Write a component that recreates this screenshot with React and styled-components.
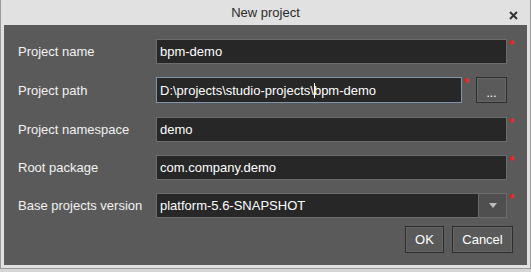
import React from 'react';
import styled, { createGlobalStyle } from 'styled-components';

const GlobalStyle = createGlobalStyle`
    html, body {
        margin: 0;
        padding: 0;
        background: #d6d6d6;
        font-family: "Liberation Sans", Arial, sans-serif;
    }
`;

const Window = styled.div`
    width: 531px;
    height: 269px;
    box-sizing: border-box;
    border: 1px solid #9a9a9a;
    border-top: none;
    background: #e1e1e1;
    padding: 0 3px 3px 3px;
    display: flex;
    flex-direction: column;
`;

const TitleBar = styled.div`
    height: 25px;
    display: flex;
    align-items: center;
    justify-content: center;
    position: relative;
    color: #2b2b2b;
    font-size: 13px;
`;

const Close = styled.svg`
    position: absolute;
    right: 9px;
    top: 11px;
`;

const Body = styled.div`
    flex: 1;
    background: #5a5a5a;
    padding: 14px 6px 0 14px;
    display: flex;
    flex-direction: column;
`;

const Row = styled.div`
    display: flex;
    align-items: stretch;
    height: ${p => p.$h || 25}px;
    margin-bottom: ${p => p.$mb || 13}px;
`;

const Label = styled.div`
    width: 138px;
    display: flex;
    align-items: center;
    color: #f2f2f2;
    font-size: 13px;
`;

const Field = styled.div`
    flex: 1;
    box-sizing: border-box;
    background: #272727;
    border: 1px solid ${p => p.$focus ? '#7f93ad' : '#6c6c6c'};
    color: #fff;
    font-size: 13px;
    display: flex;
    align-items: center;
    padding-left: 3px;
    white-space: nowrap;
    overflow: hidden;
`;

const Caret = styled.span`
    display: inline-block;
    width: 1px;
    height: 15px;
    background: #fff;
    margin: 0 -1px 0 0;
`;

const Star = styled.div`
    width: 14px;
    color: #ff1a1a;
    font-size: 13px;
    font-weight: bold;
    line-height: 11px;
    padding-left: 2px;
    box-sizing: border-box;
`;

const DotsButton = styled.div`
    width: 31px;
    box-sizing: border-box;
    border: 1px solid #2e2e2e;
    box-shadow: inset 0 0 0 1px #666;
    color: #fff;
    font-size: 12px;
    display: flex;
    align-items: center;
    justify-content: center;
    padding-top: 5px;
`;

const DropButton = styled.div`
    width: 27px;
    align-self: stretch;
    margin: -1px -1px -1px auto;
    background: #4f4f4f;
    border: 1px solid #6c6c6c;
    display: flex;
    align-items: center;
    justify-content: center;
`;

const Footer = styled.div`
    display: flex;
    justify-content: flex-end;
    gap: 8px;
    padding-right: 8px;
    margin-top: -5px;
`;

const Button = styled.div`
    width: ${p => p.$w}px;
    height: 27px;
    box-sizing: border-box;
    border: 1px solid #2e2e2e;
    box-shadow: inset 0 0 0 1px #646464;
    color: #fff;
    font-size: 13px;
    display: flex;
    align-items: center;
    justify-content: center;
`;

const App = () => (
    <>
        <GlobalStyle />
        <Window>
            <TitleBar>
                New project
                <Close width="9" height="9" viewBox="0 0 9 9">
                    <path d="M1 1 L8 8 M8 1 L1 8" stroke="#333" strokeWidth="2" />
                </Close>
            </TitleBar>
            <Body>
                <Row>
                    <Label>Project name</Label>
                    <Field>bpm-demo</Field>
                    <Star>*</Star>
                </Row>
                <Row $h={26} $mb={14}>
                    <Label>Project path</Label>
                    <Field $focus>D:\projects\studio-projects\<Caret />bpm-demo</Field>
                    <Star>*</Star>
                    <DotsButton>...</DotsButton>
                    <Star />
                </Row>
                <Row>
                    <Label>Project namespace</Label>
                    <Field>demo</Field>
                    <Star>*</Star>
                </Row>
                <Row>
                    <Label>Root package</Label>
                    <Field>com.company.demo</Field>
                    <Star>*</Star>
                </Row>
                <Row>
                    <Label>Base projects version</Label>
                    <Field>
                        platform-5.6-SNAPSHOT
                        <DropButton>
                            <svg width="8" height="5" viewBox="0 0 8 5">
                                <path d="M0 0 L8 0 L4 5 Z" fill="#bdbdbd" />
                            </svg>
                        </DropButton>
                    </Field>
                    <Star>*</Star>
                </Row>
                <Footer>
                    <Button $w={39}>OK</Button>
                    <Button $w={61}>Cancel</Button>
                </Footer>
            </Body>
        </Window>
    </>
);

export default App;
